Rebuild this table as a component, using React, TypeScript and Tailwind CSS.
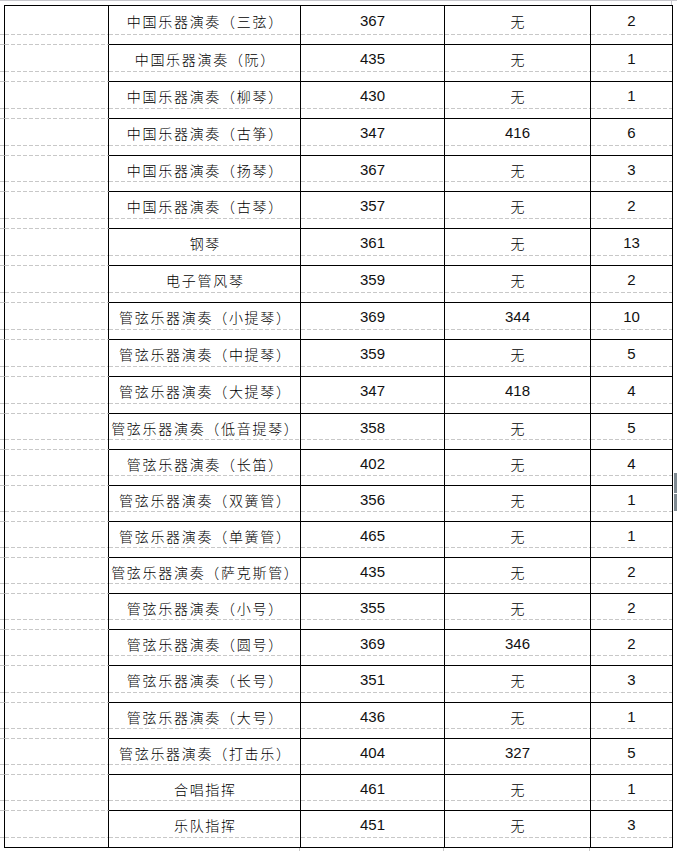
const rows: [string, string, string, string][] = [
  ["中国乐器演奏（三弦）", "367", "无", "2"],
  ["中国乐器演奏（阮）", "435", "无", "1"],
  ["中国乐器演奏（柳琴）", "430", "无", "1"],
  ["中国乐器演奏（古筝）", "347", "416", "6"],
  ["中国乐器演奏（扬琴）", "367", "无", "3"],
  ["中国乐器演奏（古琴）", "357", "无", "2"],
  ["钢琴", "361", "无", "13"],
  ["电子管风琴", "359", "无", "2"],
  ["管弦乐器演奏（小提琴）", "369", "344", "10"],
  ["管弦乐器演奏（中提琴）", "359", "无", "5"],
  ["管弦乐器演奏（大提琴）", "347", "418", "4"],
  ["管弦乐器演奏（低音提琴）", "358", "无", "5"],
  ["管弦乐器演奏（长笛）", "402", "无", "4"],
  ["管弦乐器演奏（双簧管）", "356", "无", "1"],
  ["管弦乐器演奏（单簧管）", "465", "无", "1"],
  ["管弦乐器演奏（萨克斯管）", "435", "无", "2"],
  ["管弦乐器演奏（小号）", "355", "无", "2"],
  ["管弦乐器演奏（圆号）", "369", "346", "2"],
  ["管弦乐器演奏（长号）", "351", "无", "3"],
  ["管弦乐器演奏（大号）", "436", "无", "1"],
  ["管弦乐器演奏（打击乐）", "404", "327", "5"],
  ["合唱指挥", "461", "无", "1"],
  ["乐队指挥", "451", "无", "3"],
];

// row heights in px (border included), taken from the word table
const heights = [40, 37, 37, 37, 36, 37, 37, 37, 37, 37, 37, 36, 36, 36, 36, 36, 36, 36, 37, 36, 36, 36, 37];

// dashed gridline ~10px above each row's bottom edge
const gridLine =
  "after:absolute after:inset-x-0 after:bottom-[9px] after:h-px after:content-[''] after:bg-[repeating-linear-gradient(90deg,#c8c8c8_0_4px,transparent_4px_6px)]";
// dashed gridline on the row boundary (only seen where there is no solid border)
const edgeLine =
  "before:absolute before:inset-x-0 before:-bottom-px before:h-px before:content-[''] before:bg-[repeating-linear-gradient(90deg,#c8c8c8_0_4px,transparent_4px_6px)]";

const cjk = "font-['Noto_Sans_CJK_SC',sans-serif] font-light text-[14px] tracking-[1.7px] pl-[1.7px] text-black";
const num = "font-['Liberation_Sans_Narrow','Liberation_Sans',sans-serif] text-[15px] text-[#111]";

const isNum = (s: string) => /^\d+$/.test(s);

const Cell = ({ text, w, first }: { text: string; w: string; first: boolean }) => (
  <div
    className={`relative flex shrink-0 items-center justify-center pb-[8px] border-r border-b border-black ${w} ${first ? "border-t" : ""} ${gridLine}`}
  >
    <span className={`relative z-10 leading-[16px] ${isNum(text) ? num : cjk}`}>{text}</span>
  </div>
);

export default function App() {
  const last = rows.length - 1;
  return (
    <div className="relative w-[677px] h-[851px] overflow-hidden bg-white">
      {/* top ruler edge */}
      <div className="h-px w-full bg-[#c6c6cc]" />
      <div className="flex h-[4px]">
        <div className="w-[671px]" />
        <div className="w-px bg-[#c6c6cc]" />
      </div>

      {rows.map((r, i) => (
        <div key={i} className="flex" style={{ height: heights[i] }}>
          <div
            className={`relative w-[4px] shrink-0 border-b border-transparent ${gridLine} ${i < last ? edgeLine : ""}`}
          />
          <div
            className={`relative w-[105px] shrink-0 border-l border-r border-b border-black ${i === 0 ? "border-t" : ""} ${i < last ? `border-b-transparent ${edgeLine}` : ""} ${gridLine}`}
          />
          <Cell text={r[0]} w="w-[192px]" first={i === 0} />
          <Cell text={r[1]} w="w-[144px]" first={i === 0} />
          <Cell text={r[2]} w="w-[146px]" first={i === 0} />
          <Cell text={r[3]} w="w-[82px]" first={i === 0} />
          <div className="w-[4px] shrink-0" />
        </div>
      ))}

      {/* gridline stubs below the table */}
      <div className="flex h-[3px]">
        <div className="w-[300px] shrink-0 border-r border-[#c8c8c8]" />
        <div className="w-[144px] shrink-0 border-r border-[#c8c8c8]" />
        <div className="w-[146px] shrink-0 border-r border-[#c8c8c8]" />
      </div>

      {/* scroll marker at the right edge */}
      <div className="absolute right-0 top-[473px] flex w-[3px] flex-col">
        <div className="h-[20px] bg-[#7f8a92]" />
        <div className="h-px bg-white" />
        <div className="h-[17px] bg-[#7f8a92]" />
      </div>
    </div>
  );
}
